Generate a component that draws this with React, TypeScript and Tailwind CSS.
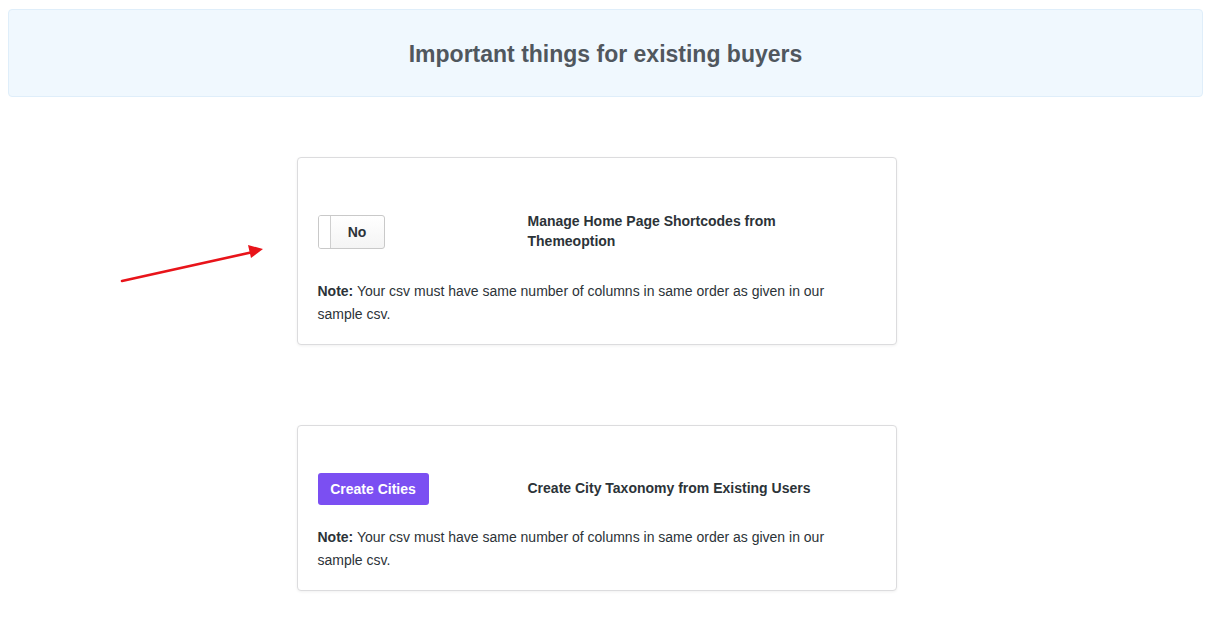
import React from "react";

function Note() {
  return (
    <p className="w-[520px] text-[14px] leading-[23px] text-[#2c3338]">
      <b className="font-bold">Note:</b> Your csv must have same number of columns in same order as given in our sample csv.
    </p>
  );
}

export default function App() {
  return (
    <div className="relative min-h-[629px] bg-white pt-[9px] font-['Liberation_Sans',Arial,sans-serif]">
      <div className="ml-[8px] mr-[6px] flex h-[88px] items-center justify-center rounded-[4px] border border-[#dfeefa] bg-[#f0f8fe] pt-[3px]">
        <h1 className="text-[23px] font-bold text-[#50575e]">Important things for existing buyers</h1>
      </div>

      <div className="pr-[16px]">
        <div className="mx-auto mt-[60px] w-[600px]">
          <div className="rounded-[4px] border border-[#dcdcde] bg-white px-[20px] pb-[18px] pt-[53px] shadow-[0_1px_3px_rgba(0,0,0,0.06)]">
            <div className="flex items-center">
              <div className="w-[210px] pt-[2px]">
                <div className="flex h-[34px] w-[67px] overflow-hidden rounded-[3px] border border-[#c9c9c9] bg-gradient-to-b from-white to-[#f4f4f4]">
                  <div className="w-[12px] border-r border-[#cfcfcf] bg-white" />
                  <div className="flex flex-1 items-center justify-center text-[14px] font-bold text-[#2c3338]">No</div>
                </div>
              </div>
              <div className="w-[270px] text-[14px] font-bold leading-[20px] text-[#2c3338]">
                Manage Home Page Shortcodes from Themeoption
              </div>
            </div>
            <div className="mt-[29px]">
              <Note />
            </div>
          </div>

          <div className="mt-[80px] rounded-[4px] border border-[#dcdcde] bg-white px-[20px] pb-[18px] pt-[47px] shadow-[0_1px_3px_rgba(0,0,0,0.06)]">
            <div className="flex items-center">
              <div className="w-[210px]">
                <button className="h-[32px] w-[111px] rounded-[3px] bg-[#7b4ff2] text-[14px] font-bold text-white">
                  Create Cities
                </button>
              </div>
              <div className="pb-[3px] text-[14px] font-bold leading-[20px] text-[#2c3338]">
                Create City Taxonomy from Existing Users
              </div>
            </div>
            <div className="mt-[21px]">
              <Note />
            </div>
          </div>
        </div>
      </div>

      <svg className="absolute left-[115px] top-[240px]" width="160" height="50" viewBox="0 0 160 50">
        <line x1="7" y1="41" x2="138" y2="12" stroke="#e8141a" strokeWidth="2.6" strokeLinecap="round" />
        <polygon points="148,9 133,5 136,18" fill="#e8141a" />
      </svg>
    </div>
  );
}
